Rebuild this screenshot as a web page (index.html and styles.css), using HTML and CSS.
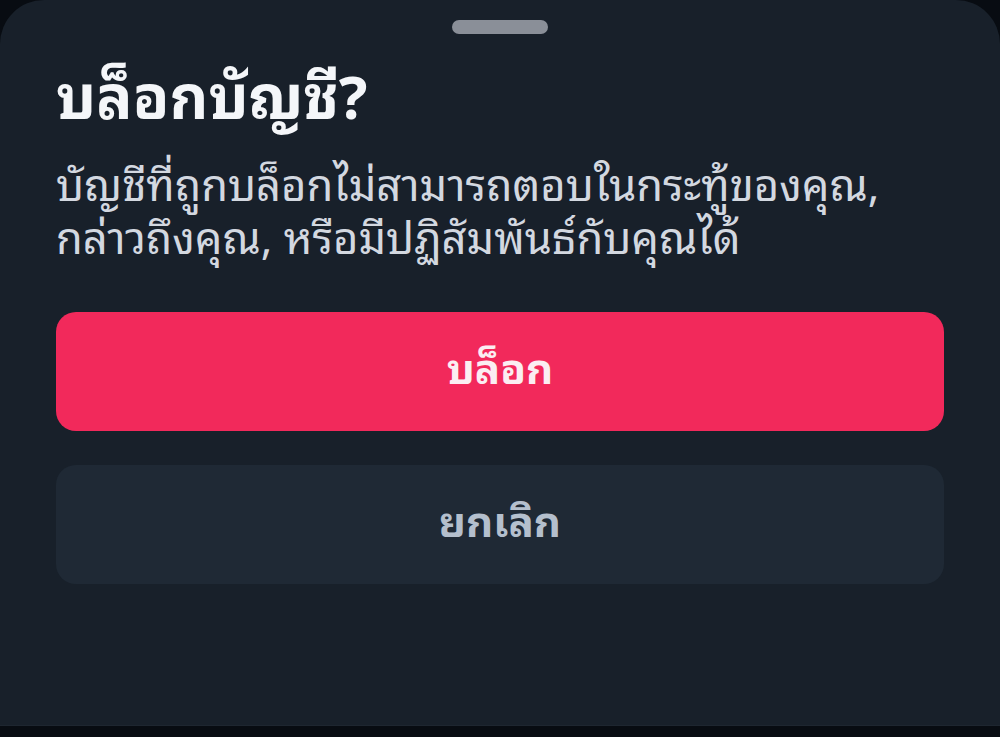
FILE: index.html
```html
<!DOCTYPE html>
<html lang="th">

<head>
    <meta charset="UTF-8">
    <meta name="viewport" content="width=device-width, initial-scale=1.0">
    <title>บล็อกบัญชี?</title>
    <link rel="stylesheet" href="styles.css">
</head>

<body>
    <div class="sheet">
        <div class="handle"></div>
        <h1 class="sheet-title">บล็อกบัญชี?</h1>
        <p class="sheet-text">บัญชีที่ถูกบล็อกไม่สามารถตอบในกระทู้ของคุณ, กล่าวถึงคุณ, หรือมีปฏิสัมพันธ์กับคุณได้</p>
        <div class="actions">
            <button class="btn btn-danger">บล็อก</button>
            <button class="btn btn-cancel">ยกเลิก</button>
        </div>
    </div>
</body>

</html>
```

FILE: styles.css
```css
:root {
    --page-bg: #080c12;
    --sheet-bg: #18202a;
    --handle: #8a8f98;
    --title: #f4f6f9;
    --text: #d3d8e0;
    --danger: #f2295b;
    --cancel-bg: #1f2935;
    --cancel-text: #b4bfcd;
}

* {
    margin: 0;
    padding: 0;
    box-sizing: border-box;
}

html,
body {
    height: 100%;
}

body {
    background-color: var(--page-bg);
    font-family: "Noto Sans Thai Looped", "Loma", "Garuda", "Waree", "Noto Sans Thai", "Noto Sans", sans-serif;
    color: var(--text);
}

.sheet {
    height: 726px;
    background-color: var(--sheet-bg);
    border-radius: 44px 44px 0 0;
    padding: 20px 56px 0;
    border-bottom: 1px solid #1e2630;
}

.handle {
    width: 96px;
    height: 14px;
    margin: 0 auto;
    border-radius: 7px;
    background-color: var(--handle);
}

.sheet-title {
    margin-top: 20px;
    font-size: 60px;
    font-weight: 700;
    line-height: 76px;
    color: var(--title);
}

.sheet-text {
    margin-top: 25px;
    font-size: 43.5px;
    line-height: 53px;
    color: var(--text);
}

.actions {
    display: flex;
    flex-direction: column;
    gap: 34px;
    margin-top: 51px;
}

.btn {
    height: 119px;
    padding-bottom: 14px;
    border: none;
    border-radius: 20px;
    font-family: inherit;
    font-size: 42px;
    font-weight: 700;
    cursor: pointer;
}

.btn-danger {
    background-color: var(--danger);
    color: #fbeef2;
}

.btn-cancel {
    background-color: var(--cancel-bg);
    color: var(--cancel-text);
}
```
